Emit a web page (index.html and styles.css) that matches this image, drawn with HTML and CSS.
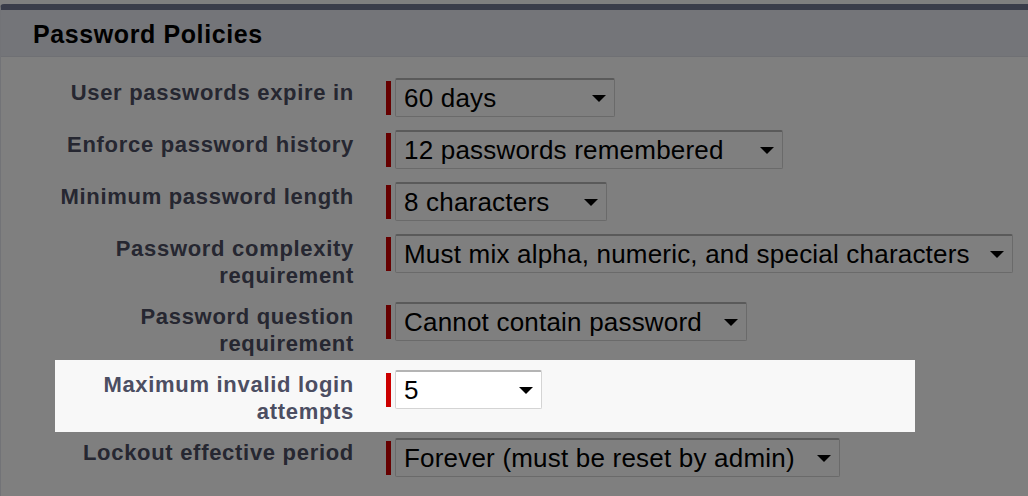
FILE: index.html
```html
<!DOCTYPE html>
<html lang="en">
<head>
<meta charset="utf-8">
<title>Password Policies</title>
<link rel="stylesheet" href="styles.css">
</head>
<body>
<div class="panel">
  <div class="panel-header"><h2 class="panel-title">Password Policies</h2></div>
  <div class="panel-body">
    <div class="row">
      <div class="label">User passwords expire in</div>
      <div class="field"><span class="req"></span><div class="select w-expire"><span class="value">60 days</span><svg class="arrow" viewBox="0 0 14 7"><path d="M0 0h14L7 7z"/></svg></div></div>
    </div>
    <div class="row">
      <div class="label">Enforce password history</div>
      <div class="field"><span class="req"></span><div class="select w-history"><span class="value">12 passwords remembered</span><svg class="arrow" viewBox="0 0 14 7"><path d="M0 0h14L7 7z"/></svg></div></div>
    </div>
    <div class="row">
      <div class="label">Minimum password length</div>
      <div class="field"><span class="req"></span><div class="select w-length"><span class="value">8 characters</span><svg class="arrow" viewBox="0 0 14 7"><path d="M0 0h14L7 7z"/></svg></div></div>
    </div>
    <div class="row">
      <div class="label">Password complexity<br>requirement</div>
      <div class="field"><span class="req"></span><div class="select w-complex"><span class="value">Must mix alpha, numeric, and special characters</span><svg class="arrow" viewBox="0 0 14 7"><path d="M0 0h14L7 7z"/></svg></div></div>
    </div>
    <div class="row">
      <div class="label">Password question<br>requirement</div>
      <div class="field"><span class="req"></span><div class="select w-question"><span class="value">Cannot contain password</span><svg class="arrow" viewBox="0 0 14 7"><path d="M0 0h14L7 7z"/></svg></div></div>
    </div>
    <div class="row highlight">
      <div class="label">Maximum invalid login<br>attempts</div>
      <div class="field"><span class="req"></span><div class="select w-attempts"><span class="value">5</span><svg class="arrow" viewBox="0 0 14 7"><path d="M0 0h14L7 7z"/></svg></div></div>
    </div>
    <div class="row">
      <div class="label">Lockout effective period</div>
      <div class="field"><span class="req"></span><div class="select w-lockout"><span class="value">Forever (must be reset by admin)</span><svg class="arrow" viewBox="0 0 14 7"><path d="M0 0h14L7 7z"/></svg></div></div>
    </div>
  </div>
</div>
</body>
</html>
```

FILE: styles.css
```css
html, body {
  margin: 0;
  padding: 0;
  background: #ffffff;
}

html {
  height: 100%;
}

body {
  box-sizing: border-box;
  min-height: 496px;
  height: 100%;
  overflow: hidden;
  display: flex;
  flex-direction: column;
  font-family: "Liberation Sans", Arial, sans-serif;
  padding-top: 4px;
}

.panel {
  flex: 1;
  border-top: 6px solid #747a94;
  border-top-left-radius: 4px;
  border-left: 1px solid #e4e6ee;
}

.panel-header {
  height: 46px;
  background: #e8eaf2;
  border-bottom: 1px solid #dfe1e8;
  display: flex;
  align-items: flex-start;
}

.panel-title {
  margin: 0;
  padding: 9px 0 0 32px;
  font-size: 25px;
  line-height: 30px;
  font-weight: bold;
  letter-spacing: 0.6px;
  color: #000;
}

.panel-body {
  padding-top: 21px;
  display: flex;
  flex-direction: column;
  gap: 13px;
}

.row {
  display: flex;
  align-items: flex-start;
}

.label {
  width: 313px;
  margin-left: 40px;
  padding-top: 2px;
  text-align: right;
  font-size: 22px;
  line-height: 26.5px;
  font-weight: bold;
  letter-spacing: 0.7px;
  color: #4c4e62;
  margin-right: -1px;
}

.field {
  margin-left: 33px;
  display: flex;
  align-items: stretch;
  gap: 4px;
}

.req {
  width: 5px;
  margin: 3px 0 2px;
  background: #cc0000;
}

.select {
  box-sizing: border-box;
  height: 39px;
  display: flex;
  align-items: center;
  justify-content: space-between;
  padding: 0 8px 0 8px;
  background: #ffffff;
  border: 1px solid #d4d4d4;
  border-top: 2px solid #b4b4b4;
  border-radius: 2px;
  font-size: 26px;
  letter-spacing: 0.2px;
  color: #000;
  white-space: nowrap;
}

.arrow {
  width: 14px;
  height: 7px;
  flex: none;
  fill: #000;
}

.w-expire { width: 220px; }
.w-history { width: 388px; }
.w-length { width: 212px; }
.w-complex { width: 618px; }
.w-question { width: 352px; }
.w-attempts { width: 147px; }
.w-lockout { width: 445px; }

.highlight {
  position: relative;
  z-index: 1;
}

.highlight::before {
  content: "";
  position: absolute;
  left: 54px;
  width: 860px;
  top: -10px;
  bottom: -7px;
  background: #f8f8f8;
  box-shadow: 0 0 0 3000px rgba(0, 0, 0, 0.5);
  z-index: -1;
}
```
